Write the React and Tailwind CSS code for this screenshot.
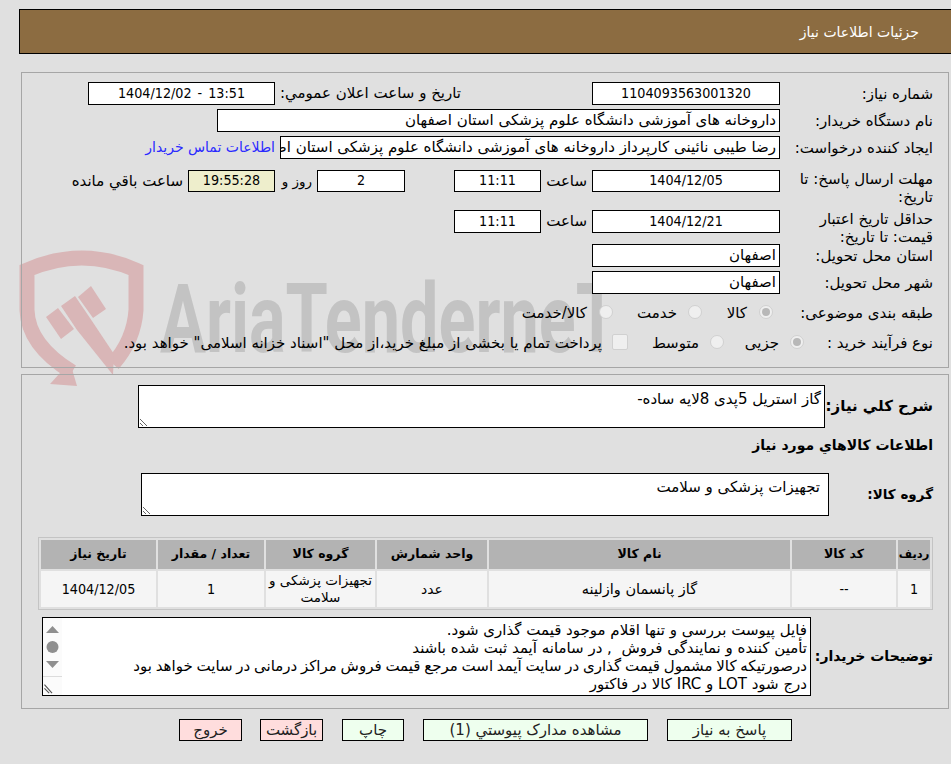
import { Fragment } from 'react';

const boxCls = "h-[23px] bg-white border border-black flex items-center px-[3px] whitespace-nowrap overflow-hidden shrink-0"
const digits = "font-['DejaVu_Sans_Condensed','DejaVu_Sans',sans-serif] text-[14.2px]"

function Box({ className, center, children }) {
	return <div className={`${boxCls} ${center ? `justify-center ${digits}` : ''} ${className}`}>{children}</div>
}

function Label({ children }) {
	return <div className="w-[145px] ml-[8px] shrink-0 leading-[18px]">{children}</div>
}

function Radio({ checked, className }) {
	return (
		<span className={`w-[14px] h-[14px] -mt-[3px] rounded-full border border-[#d0d0d0] bg-[#efefef] flex items-center justify-center shrink-0 ${className}`}>
			{checked && <span className="w-[8px] h-[8px] rounded-full bg-[#b8b8b8]" />}
		</span>
	)
}

function Watermark() {
	return (
		<svg className="absolute left-0 top-0 pointer-events-none" width="951" height="400" viewBox="0 0 951 400">
			<g fill="#d9b6b7">
				<path d="M72 372 Q28 345 27 310 L27 270 Q82 246 136 270 L136 310 Q134 340 113 364" fill="none" stroke="#d9b6b7" strokeWidth="15" />
				<polygon points="70,362 77,386 50,384" />
				<polygon points="61,306 75,296 90,318 114,354 113,375 77,330" />
				<polygon points="46,317 58,308 74,329 61,339" />
				<polygon points="78,297 91,286 106,309 93,318" />
			</g>
			<text x="160" y="352" fontSize="96" fontWeight="700" fill="#c3c3c3" textLength="458" lengthAdjust="spacingAndGlyphs" className="font-['Roboto']">AriaTenderneT</text>
		</svg>
	)
}

const columns = [
	{ title: 'ردیف', cls: 'w-[32px] text-[11.5px]', value: '1', valueCls: digits },
	{ title: 'کد کالا', cls: 'w-[104px] text-[12.5px]', value: '--', valueCls: digits },
	{ title: 'نام کالا', cls: 'w-[301px] text-[12.5px]', value: 'گاز پانسمان وازلینه', valueCls: 'text-[14.5px]' },
	{ title: 'واحد شمارش', cls: 'w-[110px] text-[12.5px]', value: 'عدد', valueCls: 'text-[14px]' },
	{ title: 'گروه کالا', cls: 'w-[109px] text-[12.5px]', value: 'تجهیزات پزشکی و سلامت', valueCls: 'text-[13.5px]' },
	{ title: 'تعداد / مقدار', cls: 'w-[106px] text-[12.5px]', value: '1', valueCls: digits },
	{ title: 'تاریخ نیاز', cls: 'w-[115px] text-[12.5px]', value: '1404/12/05', valueCls: digits },
]

const buyerNotes = [
	{ text: 'فایل پیوست بررسی و تنها اقلام موجود قیمت گذاری شود.', cls: '' },
	{ text: 'تأمین کننده و نمایندگی فروش  , در سامانه آیمد ثبت شده باشند', cls: '' },
	{ text: 'درصورتیکه کالا مشمول قیمت گذاری در سایت آیمد است مرجع قیمت فروش مراکز درمانی در سایت خواهد بود', cls: '[word-spacing:-1px]' },
	{ text: 'درج شود LOT و IRC کالا در فاکتور', cls: '' },
]

const buttons = [
	{ text: 'پاسخ به نیاز', cls: 'w-[125px] bg-[#eeffee] ml-[19px]' },
	{ text: 'مشاهده مدارک پیوستي (1)', cls: 'w-[225px] bg-[#eeffee] ml-[19px]' },
	{ text: 'چاپ', cls: 'w-[62px] bg-[#eeffee] ml-[19px]' },
	{ text: 'بازگشت', cls: 'w-[63px] bg-[#ffdddd] ml-[18px]' },
	{ text: 'خروج', cls: 'w-[63px] bg-[#ffdddd]' },
]

export default function App() {
	return (
		<div className="relative w-[951px] h-[764px] overflow-hidden bg-[#e0e0e0] text-[15px] text-black font-['DejaVu_Sans',sans-serif]">
			<Watermark />

			<div dir="rtl" className="relative">
				{/* Header */}
				<div className="mt-[9px] ml-[19px] h-[45px] bg-[#8c6c41] border-y border-l border-black flex items-center pr-[32px] text-white text-[14px] pt-[1px]">
					جزئیات اطلاعات نیاز
				</div>

				{/* Details panel */}
				<div className="mt-[18px] mr-[2px] ml-[21px] h-[296px] border border-[#a6a6a6] pr-[15px] pt-[9px]">
					<div className="flex items-center h-[23px]">
						<Label>شماره نیاز:</Label>
						<Box center className="w-[188px]">1104093563001320</Box>
						<span className="mr-[131px] w-[181px] whitespace-nowrap shrink-0">تاریخ و ساعت اعلان عمومي:</span>
						<Box center className="w-[187px] mr-[5px]"><span dir="ltr" className="[word-spacing:2px]">1404/12/02 - 13:51</span></Box>
					</div>
					<div className="flex items-center h-[23px] mt-[4px]">
						<Label>نام دستگاه خریدار:</Label>
						<Box className="w-[563px]">داروخانه های آموزشی دانشگاه علوم پزشکی استان اصفهان</Box>
					</div>
					<div className="flex items-center h-[23px] mt-[4px]">
						<Label>ایجاد کننده درخواست:</Label>
						<Box className="w-[500px]">رضا طیبی نائینی کارپرداز داروخانه های آموزشی دانشگاه علوم پزشکی استان اصفهان</Box>
						<span className="mr-[5px] text-[#2a2aff] text-[14px] whitespace-nowrap">اطلاعات تماس خریدار</span>
					</div>
					<div className="flex items-start mt-[11px] h-[40px]">
						<Label>مهلت ارسال پاسخ: تا تاریخ:</Label>
						<Box center className="w-[188px] !h-[22px]">1404/12/05</Box>
						<span className="mr-[5px] w-[46px] leading-[22px]">ساعت</span>
						<Box center className="w-[87px] !h-[22px]">11:11</Box>
						<span className="w-[49px]" />
						<Box center className="w-[88px] !h-[22px]">2</Box>
						<span className="mr-[5px] w-[37px] leading-[22px] text-[13.5px] whitespace-nowrap">روز و</span>
						<Box center className="w-[87px] !h-[22px] !bg-[#eeeecc]">19:55:28</Box>
						<span className="mr-[5px] leading-[22px] whitespace-nowrap">ساعت باقي مانده</span>
					</div>
					<div className="flex items-start h-[34px]">
						<Label>حداقل تاریخ اعتبار قیمت: تا تاریخ:</Label>
						<Box center className="w-[188px]">1404/12/21</Box>
						<span className="mr-[5px] w-[46px] leading-[23px]">ساعت</span>
						<Box center className="w-[87px]">11:11</Box>
					</div>
					<div className="flex items-center h-[23px]">
						<Label>استان محل تحویل:</Label>
						<Box className="w-[188px]">اصفهان</Box>
					</div>
					<div className="flex items-center h-[23px] mt-[4px]">
						<Label>شهر محل تحویل:</Label>
						<Box className="w-[188px]">اصفهان</Box>
					</div>
					<div className="flex items-center h-[20px] mt-[9px]">
						<Label>طبقه بندی موضوعی:</Label>
						<Radio checked className="mr-[7px]" />
						<span className="mr-[12px] w-[45px]">کالا</span>
						<Radio />
						<span className="mr-[11px] w-[64px]">خدمت</span>
						<Radio />
						<span className="mr-[12px] whitespace-nowrap">کالا/خدمت</span>
					</div>
					<div className="flex items-center h-[20px] mt-[10px]">
						<div className="w-[129px] shrink-0 leading-[18px]">نوع فرآیند خرید :</div>
						<Radio checked />
						<span className="mr-[11px] w-[55px]">جزیی</span>
						<Radio />
						<span className="mr-[11px] w-[71px]">متوسط</span>
						<span className="w-[16px] h-[16px] -mt-[3px] rounded-[2px] bg-[#efefef] border border-[#d0d0d0] shrink-0" />
						<span className="mr-[10px] whitespace-nowrap">پرداخت تمام یا بخشی از مبلغ خرید،از محل "اسناد خزانه اسلامی" خواهد بود.</span>
					</div>
				</div>

				{/* Items panel */}
				<div className="mt-[6px] mr-[2px] ml-[21px] h-[335px] border border-[#a6a6a6] pr-[15px] pt-[10px]">
					<div className="flex items-center h-[43px]">
						<div className="w-[108px] shrink-0 font-bold text-[15px] whitespace-nowrap">شرح کلي نیاز:</div>
						<textarea readOnly defaultValue="گاز استریل 5پدی 8لایه ساده-" className="w-[687px] h-[43px] bg-white border border-black px-[3px] py-[2px] outline-none" />
					</div>
					<div className="mt-[7px] font-bold text-[14px] leading-[20px]">اطلاعات کالاهاي مورد نیاز</div>
					<div className="flex items-center h-[43px] mt-[18px]">
						<div className="w-[104px] shrink-0 font-bold text-[13.5px] whitespace-nowrap">گروه کالا:</div>
						<textarea readOnly defaultValue="تجهیزات پزشکی و سلامت" className="w-[688px] h-[43px] bg-white border border-black px-[8px] py-[2px] outline-none" />
					</div>

					<table className="mt-[21px] w-[895px] table-fixed border-separate border-spacing-[2px] border border-[#c4c4c4] text-center">
						<thead>
							<tr>
								{columns.map((col) => (
									<th key={col.title} className={`${col.cls} h-[29px] p-0 bg-[#b3b3b3] font-bold`}>{col.title}</th>
								))}
							</tr>
						</thead>
						<tbody>
							<tr>
								{columns.map((col) => (
									<td key={col.title} className={`h-[36px] p-0 bg-[#f5f5f5] leading-[17px] ${col.valueCls}`}>{col.value}</td>
								))}
							</tr>
						</tbody>
					</table>

					<div className="flex items-center mt-[7px] h-[79px]">
						<div className="w-[122px] shrink-0 font-bold text-[14px] whitespace-nowrap">توضیحات خریدار:</div>
						<div className="w-[769px] h-[79px] bg-white border border-black flex">
							<div className="flex-1 pr-[3px] pt-[3px] leading-[18px] whitespace-pre overflow-hidden">
								{buyerNotes.map((line) => (
									<Fragment key={line.text}><span className={line.cls}>{line.text}</span><br /></Fragment>
								))}
							</div>
							{/* scrollbar */}
							<div className="w-[19px] shrink-0 bg-[#fbfbfb] flex flex-col">
								<svg width="19" height="58" viewBox="0 0 19 58" className="block">
									<polygon points="3,15 16,15 9.5,8" fill="#8f8f8f" />
									<circle cx="9.5" cy="29" r="6" fill="#8f8f8f" />
									<polygon points="3,43 16,43 9.5,50" fill="#8f8f8f" />
								</svg>
								<svg width="19" height="19" viewBox="0 0 19 19" className="block border-t border-[#dcdcdc]">
									<path d="M1 8 L9 17 M1 12 L6 17" stroke="#555" strokeWidth="1.2" />
								</svg>
							</div>
						</div>
					</div>
				</div>

				{/* Actions */}
				<div className="flex mt-[10px] pr-[159px] h-[22px]">
					{buttons.map((b) => (
						<button key={b.text} className={`${b.cls} h-[22px] pt-[1px] border border-black text-[15px] text-[#222] leading-none`}>{b.text}</button>
					))}
				</div>
			</div>
		</div>
	)
}
